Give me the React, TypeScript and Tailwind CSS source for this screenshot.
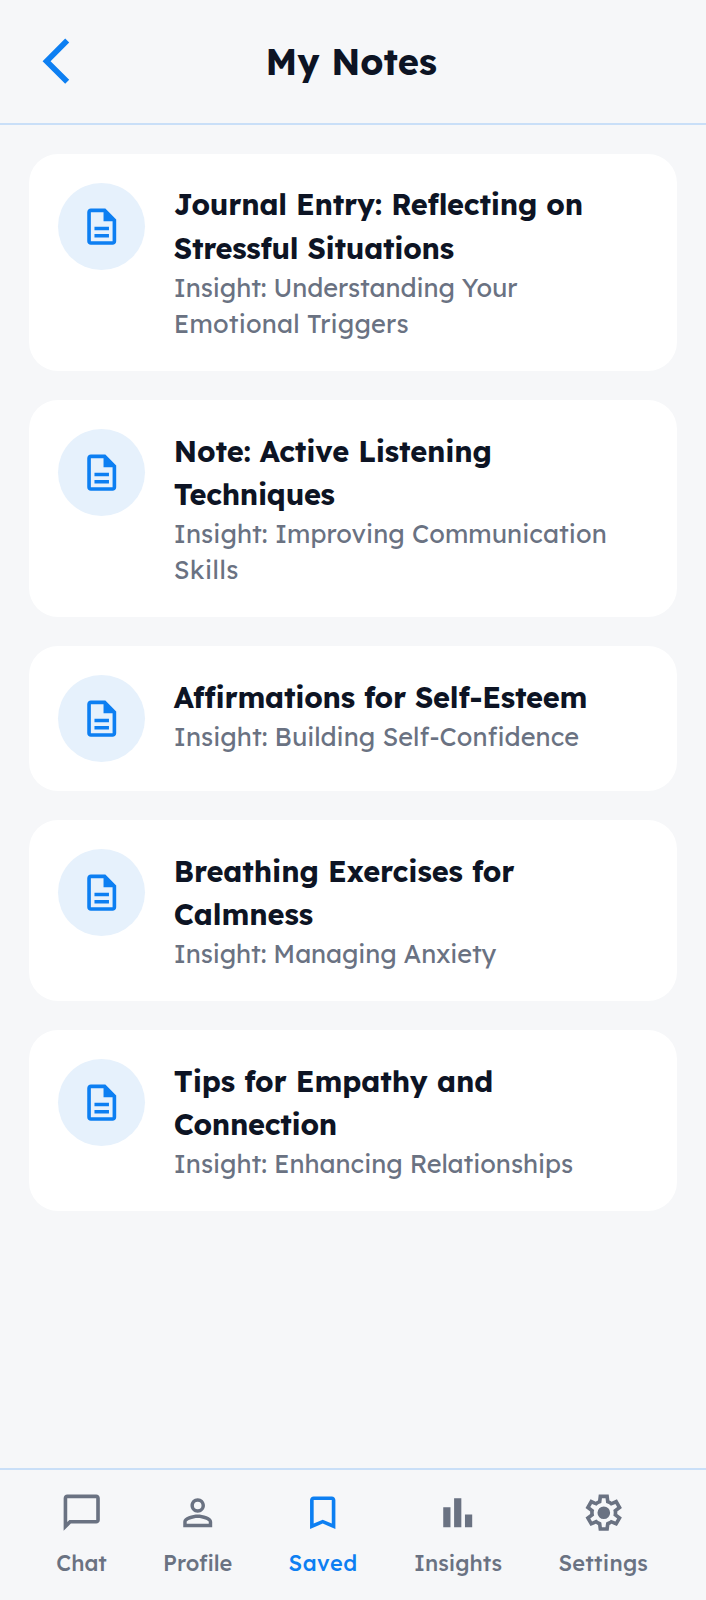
const docPath =
  'M8 16h8v2H8zm0-4h8v2H8zm6-10H6c-1.1 0-2 .9-2 2v16c0 1.1.89 2 1.99 2H18c1.1 0 2-.9 2-2V8l-6-6zm4 18H6V4h7v5h5v11z';
const chatPath =
  'M4 4h16v12H5.17L4 17.17V4m0-2c-1.1 0-1.99.9-1.99 2L2 22l4-4h14c1.1 0 2-.9 2-2V4c0-1.1-.9-2-2-2H4z';
const personPath =
  'M12 5.9a2.1 2.1 0 110 4.2 2.1 2.1 0 010-4.2m0 9c2.97 0 6.1 1.46 6.1 2.1v1.1H5.9V17c0-.64 3.13-2.1 6.1-2.1M12 4C9.79 4 8 5.79 8 8s1.79 4 4 4 4-1.79 4-4-1.79-4-4-4zm0 9c-2.67 0-8 1.34-8 4v3h16v-3c0-2.66-5.33-4-8-4z';
const bookmarkPath =
  'M17 3H7c-1.1 0-2 .9-2 2v16l7-3 7 3V5c0-1.1-.9-2-2-2zm0 15l-5-2.18L7 18V5h10v13z';
const barsPath = 'M4 9h4v11H4zm12 4h4v7h-4zm-6-9h4v16h-4z';
const gearPath =
  'M9.25 22l-.4-3.2q-.325-.125-.612-.3-.288-.175-.563-.375L4.7 19.375l-2.75-4.75 2.575-1.95Q4.5 12.5 4.5 12.337v-.675q0-.162.025-.337L1.95 9.375l2.75-4.75 2.975 1.25q.275-.2.575-.375t.6-.3l.4-3.2h5.5l.4 3.2q.325.125.613.3.287.175.562.375l2.975-1.25 2.75 4.75-2.575 1.95q.025.175.025.337v.675q0 .163-.05.338l2.575 1.95-2.75 4.75-2.95-1.25q-.275.2-.575.375t-.6.3l-.4 3.2zm1.75-2h1.975l.35-2.65q.775-.2 1.438-.588.662-.387 1.212-.937l2.475 1.025.975-1.7-2.15-1.625q.125-.35.175-.737.05-.388.05-.788t-.05-.788q-.05-.387-.175-.737l2.15-1.625-.975-1.7-2.475 1.05q-.55-.575-1.212-.963-.663-.387-1.438-.587L13 4h-1.975l-.35 2.65q-.775.2-1.437.587-.663.388-1.213.938L5.55 7.15l-.975 1.7 2.15 1.6q-.125.375-.175.75-.05.375-.05.8 0 .4.05.775.05.375.175.75l-2.15 1.625.975 1.7 2.475-1.05q.55.575 1.213.963.662.387 1.437.587zm1.05-4.5q1.45 0 2.475-1.025Q15.55 13.45 15.55 12q0-1.45-1.025-2.475Q13.5 8.5 12.05 8.5q-1.475 0-2.488 1.025Q8.55 10.55 8.55 12q0 1.45 1.012 2.475Q10.575 15.5 12.05 15.5z';

function Icon({ d, className }: { d: string; className: string }) {
  return (
    <svg viewBox="0 0 24 24" fill="currentColor" fillRule="evenodd" className={className} aria-hidden="true">
      <path d={d} />
    </svg>
  );
}

type Line = { text: string; tracking: string };
type Note = { title: Line[]; insight: Line[] };

const notes: Note[] = [
  {
    title: [
      { text: 'Journal Entry: Reflecting on', tracking: 'tracking-[-0.19px]' },
      { text: 'Stressful Situations', tracking: 'tracking-[-0.25px]' },
    ],
    insight: [
      { text: 'Insight: Understanding Your', tracking: 'tracking-[-0.08px]' },
      { text: 'Emotional Triggers', tracking: 'tracking-[0.18px]' },
    ],
  },
  {
    title: [
      { text: 'Note: Active Listening', tracking: 'tracking-[-0.16px]' },
      { text: 'Techniques', tracking: 'tracking-[-0.3px]' },
    ],
    insight: [
      { text: 'Insight: Improving Communication', tracking: 'tracking-[0.07px]' },
      { text: 'Skills', tracking: 'tracking-[0.5px]' },
    ],
  },
  {
    title: [{ text: 'Affirmations for Self-Esteem', tracking: 'tracking-[-0.22px]' }],
    insight: [{ text: 'Insight: Building Self-Confidence', tracking: 'tracking-[0.04px]' }],
  },
  {
    title: [
      { text: 'Breathing Exercises for', tracking: 'tracking-[-0.09px]' },
      { text: 'Calmness', tracking: 'tracking-[-0.1px]' },
    ],
    insight: [{ text: 'Insight: Managing Anxiety', tracking: 'tracking-[-0.1px]' }],
  },
  {
    title: [
      { text: 'Tips for Empathy and', tracking: 'tracking-[-0.08px]' },
      { text: 'Connection', tracking: 'tracking-[-0.3px]' },
    ],
    insight: [{ text: 'Insight: Enhancing Relationships', tracking: 'tracking-[-0.03px]' }],
  },
];

const tabs = [
  { label: 'Chat', icon: chatPath, tracking: 'tracking-[0px]', active: false },
  { label: 'Profile', icon: personPath, tracking: 'tracking-[0px]', active: false },
  { label: 'Saved', icon: bookmarkPath, tracking: 'tracking-[0.6px]', active: true },
  { label: 'Insights', icon: barsPath, tracking: 'tracking-[0px]', active: false },
  { label: 'Settings', icon: gearPath, tracking: 'tracking-[0.3px]', active: false },
];

function Lines({ lines }: { lines: Line[] }) {
  return (
    <>
      {lines.map((l) => (
        <span key={l.text} className={`block whitespace-nowrap ${l.tracking}`}>
          {l.text}
        </span>
      ))}
    </>
  );
}

function NoteCard({ note }: { note: Note }) {
  return (
    <article className="flex items-start gap-[28.97px] rounded-[28.97px] bg-white p-[28.97px]">
      <div className="flex size-[86.9px] shrink-0 items-center justify-center rounded-full bg-[#e6f1fc] text-[#0d7ff2]">
        <Icon d={docPath} className="size-[43.45px]" />
      </div>
      <div className="min-w-0 flex-1">
        <h2 className="-mb-[0.5px] pt-[0.5px] text-[28.97px] leading-[43.45px] font-bold text-[#0d1424]">
          <Lines lines={note.title} />
        </h2>
        <p className="text-[25.34px] leading-[36.2px] text-gray-500">
          <Lines lines={note.insight} />
        </p>
      </div>
    </article>
  );
}

export default function App() {
  return (
    <div className="flex h-[1600px] w-full flex-col overflow-hidden bg-[#f6f7f9] font-['Lexend','Inter',sans-serif]">
      <header className="flex h-[125px] shrink-0 items-center border-b-2 border-[#c9dff8] px-[28.97px]">
        <button className="text-[#0d7ff2]" aria-label="Back">
          <Icon d="M17.77 3.77L16 2 6 12l10 10 1.77-1.77L9.54 12z" className="size-[54.3px]" />
        </button>
        <h1 className="flex-1 pr-[58px] text-center text-[36.2px] leading-[45px] font-bold text-[#0d1424]">
          My Notes
        </h1>
      </header>
      <main className="flex flex-1 flex-col gap-[28.97px] p-[28.97px]">
        {notes.map((n) => (
          <NoteCard key={n.title[0].text} note={n} />
        ))}
      </main>
      <nav className="flex h-[132px] shrink-0 items-start justify-evenly border-t-2 border-[#c9dff8] pt-[21.4px] pr-[1.5px]">
        {tabs.map((t) => (
          <a
            key={t.label}
            className={`flex flex-col items-center gap-[13.3px] ${t.active ? 'text-[#0d7ff2]' : 'text-gray-500'}`}
          >
            <Icon d={t.icon} className="size-[43.45px]" />
            <span className={`text-[21.72px] leading-[29px] font-medium whitespace-nowrap ${t.tracking}`}>{t.label}</span>
          </a>
        ))}
      </nav>
    </div>
  );
}
